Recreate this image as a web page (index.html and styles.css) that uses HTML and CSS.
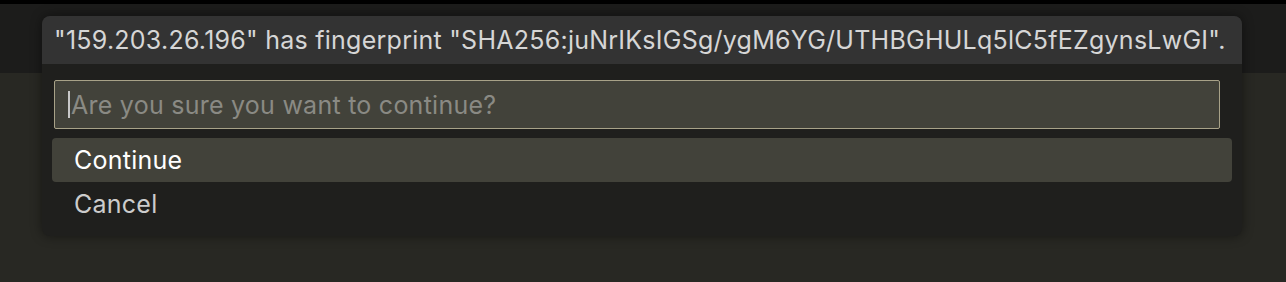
FILE: index.html
```html
<!DOCTYPE html>
<html>
<head>
<meta charset="utf-8">
<link rel="stylesheet" href="styles.css">
</head>
<body>
<div class="topline"></div>
<div class="titlebar"></div>
<div class="workspace"></div>
<div class="dialog">
  <div class="dialog-title">"159.203.26.196" has fingerprint "SHA256:juNrIKsIGSg/ygM6YG/UTHBGHULq5lC5fEZgynsLwGI".</div>
  <div class="dialog-input-wrap">
    <div class="dialog-input"><span class="caret"></span><span class="placeholder">Are you sure you want to continue?</span></div>
  </div>
  <div class="dialog-list">
    <div class="item selected">Continue</div>
    <div class="item">Cancel</div>
  </div>
</div>
</body>
</html>
```

FILE: styles.css
```css
html, body {
  margin: 0;
  padding: 0;
}
body {
  width: 1286px;
  height: 282px;
  background: #282823;
  font-family: Inter, "Noto Sans", sans-serif;
  position: relative;
  overflow: hidden;
}
.topline {
  height: 4px;
  background: #000;
}
.titlebar {
  height: 69px;
  background: #1c1c1b;
}
.dialog {
  position: absolute;
  left: 42px;
  top: 16px;
  width: 1200px;
  height: 220px;
  background: #1f1f1d;
  border-radius: 8px;
  overflow: hidden;
  box-shadow: 0 0 12px rgba(0,0,0,0.45);
  display: flex;
  flex-direction: column;
  font-size: 25px;
  letter-spacing: 0.25px;
}
.dialog-title {
  height: 48px;
  background: #333333;
  color: #d6d6d6;
  line-height: 48px;
  padding-left: 12px;
  white-space: nowrap;
}
.dialog-input-wrap {
  padding: 16px 22px 0 12px;
}
.dialog-input {
  height: 47px;
  border: 1px solid #a8a288;
  border-radius: 2px;
  background: #42423a;
  display: flex;
  align-items: center;
  padding-left: 13px;
}
.caret {
  width: 2px;
  height: 27px;
  background: #c8c8c8;
}
.placeholder {
  color: #8a8a84;
  margin-left: 1px;
}
.dialog-list {
  padding: 9px 10px 0 10px;
}
.item {
  height: 44px;
  line-height: 44px;
  padding-left: 22px;
  color: #cccccc;
  border-radius: 4px;
}
.item.selected {
  background: #42423a;
  color: #ffffff;
}
```
